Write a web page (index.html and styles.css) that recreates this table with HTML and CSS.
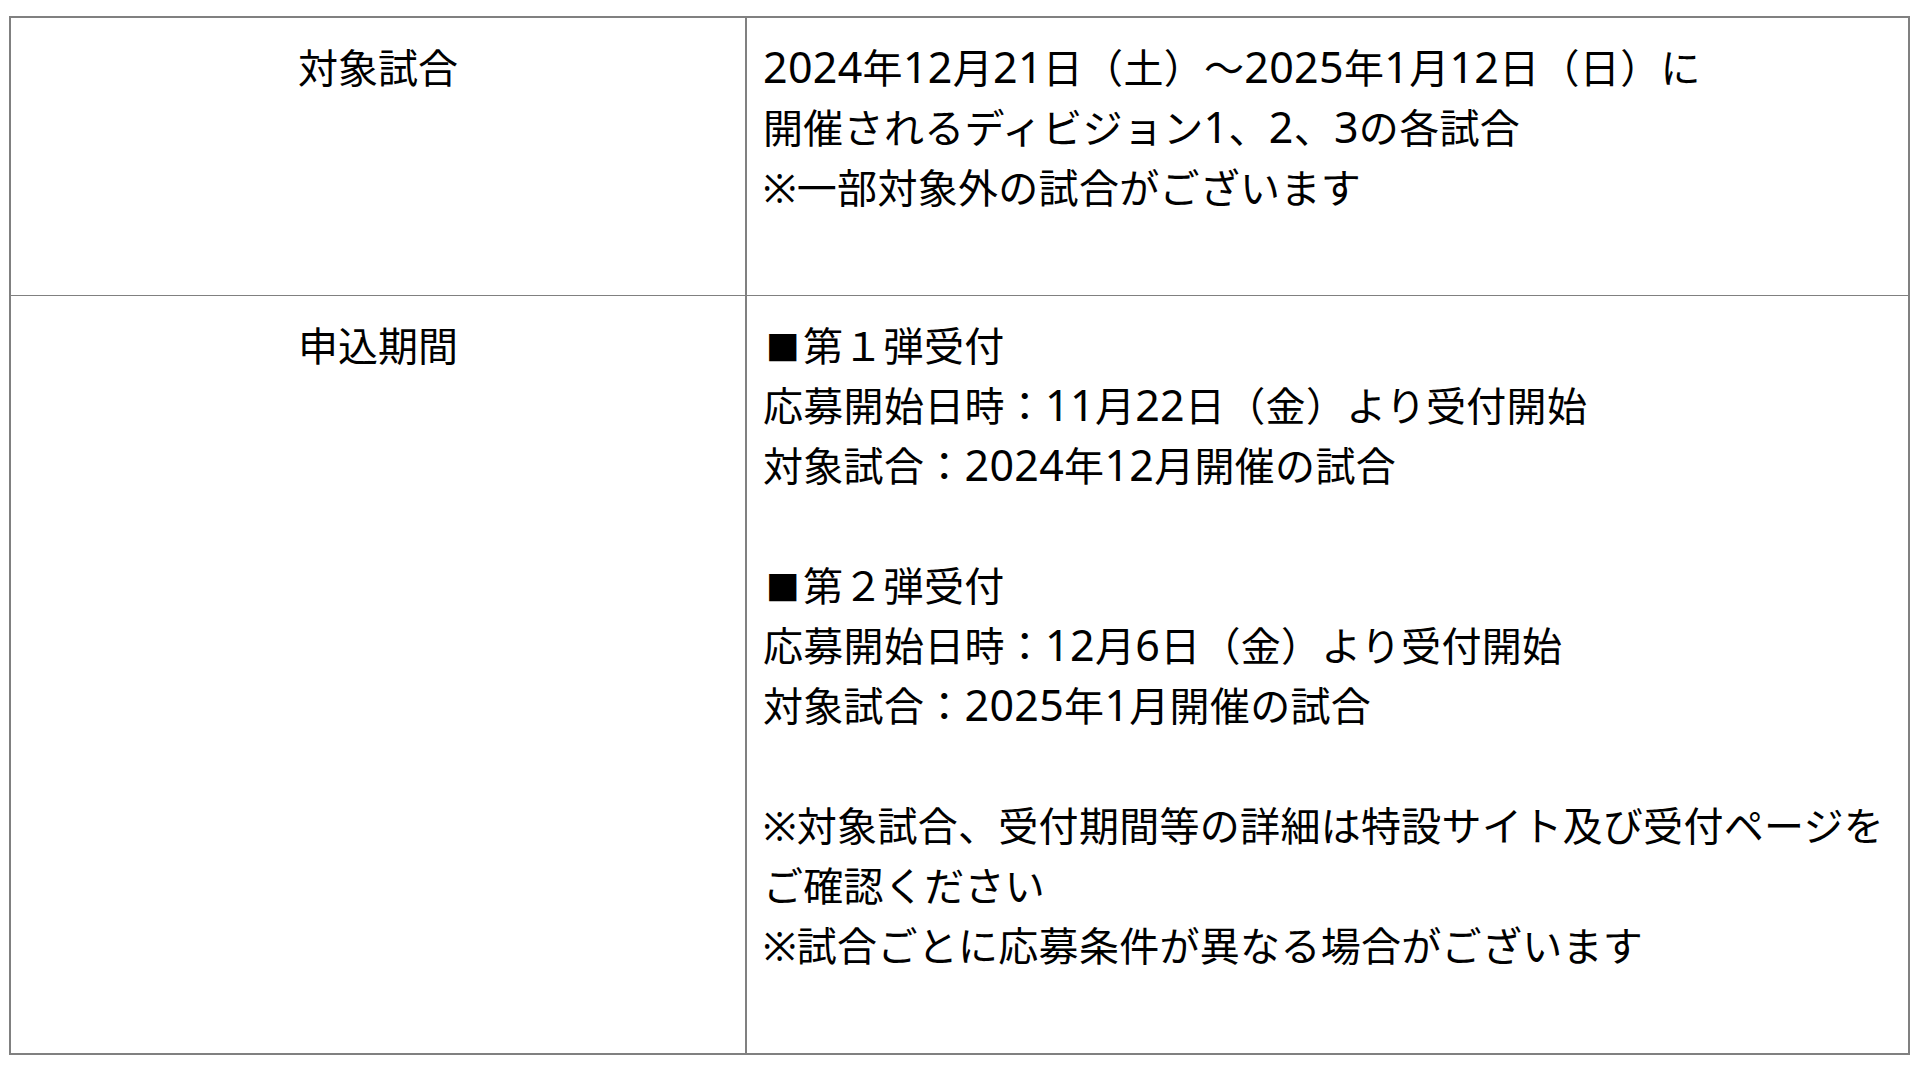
FILE: index.html
```html
<!DOCTYPE html>
<html lang="ja">
<head>
<meta charset="utf-8">
<title>対象試合・申込期間</title>
<link rel="stylesheet" href="styles.css">
</head>
<body>
<div class="page">
  <div class="table">
    <div class="cell label row-first">対象試合</div>
    <div class="cell body row-first"><span class="num">2024</span>年<span class="num">12</span>月<span class="num">21</span>日（土）～<span class="num">2025</span>年<span class="num">1</span>月<span class="num">12</span>日（日）に<br>開催されるディビジョン<span class="num">1</span>、<span class="num">2</span>、<span class="num">3</span>の各試合<br>※一部対象外の試合がございます</div>
    <div class="cell label">申込期間</div>
    <div class="cell body"><span class="sq">■</span>第１弾受付<br>応募開始日時：<span class="num">11</span>月<span class="num">22</span>日（金）より受付開始<br>対象試合：<span class="num">2024</span>年<span class="num">12</span>月開催の試合<br><br><span class="sq">■</span>第２弾受付<br>応募開始日時：<span class="num">12</span>月<span class="num">6</span>日（金）より受付開始<br>対象試合：<span class="num">2025</span>年<span class="num">1</span>月開催の試合<br><br>※対象試合、受付期間等の詳細は特設サイト及び受付ページを<br>ご確認ください<br>※試合ごとに応募条件が異なる場合がございます</div>
  </div>
</div>
</body>
</html>
```
FILE: styles.css
```css
html, body {
  margin: 0;
  padding: 0;
  background: #ffffff;
}
.page {
  padding: 16px 10px 0 9px;
}
.table {
  display: grid;
  grid-template-columns: 736px 1fr;
  border: 2px solid #808080;
  font-family: "Noto Sans", "Noto Sans CJK JP", sans-serif;
  font-size: 40px;
  line-height: 60px;
  color: #000000;
}
.cell {
  padding: 20px 20px 77px 16px;
}
.label {
  text-align: center;
  padding-left: 20px;
  border-right: 2px solid #808080;
}
.row-first {
  border-bottom: 1px solid #808080;
}
.body {
  text-align: left;
  letter-spacing: 0.3px;
}
.num {
  font-size: 43px;
  line-height: 1;
}
.sq {
  display: inline-block;
  width: 40px;
  font-size: 34px;
  line-height: 1;
  text-align: center;
}
```
